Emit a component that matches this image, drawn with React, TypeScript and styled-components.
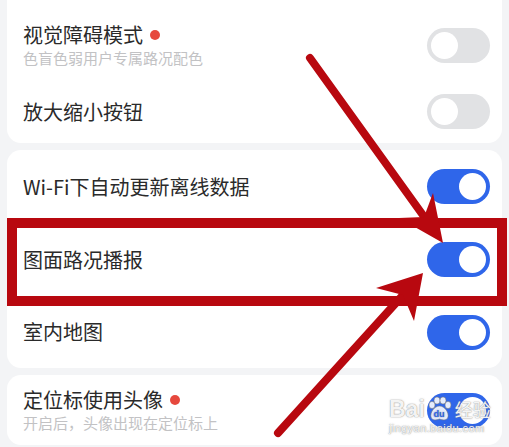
import React from 'react';
import styled, { createGlobalStyle } from 'styled-components';

const GlobalStyle = createGlobalStyle`
  body {
    margin: 0;
    background: #f3f4f6;
    font-family: "Noto Sans CJK SC", "Noto Sans", sans-serif;
  }
`;

const Page = styled.div`
  position: relative;
  width: 509px;
  height: 447px;
  overflow: hidden;
  padding: 0 7px;
  box-sizing: border-box;
  display: flex;
  flex-direction: column;
  gap: 7px;
`;

const Card = styled.div<{ $cut?: boolean }>`
  background: #ffffff;
  border-radius: ${(p) => (p.$cut ? '0 0 14px 14px' : '14px')};
  display: flex;
  flex-direction: column;
  flex-shrink: 0;
`;

const Row = styled.div<{ $h: number; $top?: number }>`
  height: ${(p) => p.$h}px;
  padding: ${(p) => p.$top || 0}px 12px 0 16px;
  box-sizing: border-box;
  display: flex;
  align-items: center;
  justify-content: space-between;
`;

const TextBlock = styled.div`
  display: flex;
  flex-direction: column;
`;

const Title = styled.div`
  display: flex;
  align-items: center;
  font-size: 20px;
  line-height: 26px;
  color: #2a2a2a;
`;

const Dot = styled.span`
  width: 10px;
  height: 10px;
  border-radius: 50%;
  background: #e6483d;
  margin-left: 7px;
`;

const Sub = styled.div`
  font-size: 15px;
  line-height: 20px;
  color: #c2c2c4;
`;

const Track = styled.div<{ $on: boolean }>`
  width: 63px;
  height: 35px;
  border-radius: 18px;
  background: ${(p) => (p.$on ? '#2f66ea' : '#e1e2e4')};
  display: flex;
  align-items: center;
  justify-content: ${(p) => (p.$on ? 'flex-end' : 'flex-start')};
  padding: 0 4px;
  box-sizing: border-box;
  flex-shrink: 0;
`;

const Knob = styled.div`
  width: 27px;
  height: 27px;
  border-radius: 50%;
  background: #ffffff;
`;

const Overlay = styled.svg`
  position: absolute;
  left: 0;
  top: 0;
  pointer-events: none;
`;

const Watermark = styled.div`
  position: absolute;
  left: 389px;
  top: 396px;
  display: flex;
  flex-direction: column;
  align-items: flex-start;
  color: rgba(255, 255, 255, 0.92);
  text-shadow: 0 0 1px rgba(110, 110, 110, 0.8), 0 0 2px rgba(150, 150, 150, 0.5);
  font-family: "Liberation Sans", sans-serif;
`;

const MarkLine = styled.div`
  display: flex;
  align-items: center;
  gap: 1px;
`;

const MarkBig = styled.span`
  font-size: 23px;
  font-weight: bold;
  line-height: 26px;
`;

const MarkCn = styled.span`
  font-family: "Noto Sans CJK SC", sans-serif;
  font-size: 18px;
  line-height: 26px;
  margin-left: 2px;
`;

const MarkUrl = styled.span`
  font-size: 11px;
  line-height: 13px;
  letter-spacing: 0.4px;
`;

const Toggle = ({ on }: { on: boolean }) => (
  <Track $on={on}>
    <Knob />
  </Track>
);

const Paw = () => (
  <svg width="26" height="26" viewBox="0 0 26 26">
    <g fill="rgba(255,255,255,0.88)" stroke="rgba(120,120,120,0.7)" strokeWidth="0.8">
      <ellipse cx="6" cy="9" rx="3" ry="3.6" />
      <ellipse cx="11" cy="4.5" rx="3" ry="3.6" />
      <ellipse cx="17" cy="4.5" rx="3" ry="3.6" />
      <ellipse cx="22" cy="9" rx="3" ry="3.6" />
      <path d="M13.5 10 C 8 10 4 17 5 21 C 6 25 11 24 13.5 23 C 16 24 21 25 22 21 C 23 17 19 10 13.5 10 Z" />
    </g>
    <text x="7.5" y="21" fontSize="9" fontWeight="bold" fill="#2f66ea" fontFamily="Liberation Sans, sans-serif">du</text>
  </svg>
);

const RED = '#b8080f';

const App = () => {
  return (
    <>
      <GlobalStyle />
      <Page>
        <Card $cut>
          <Row $h={80} $top={10}>
            <TextBlock>
              <Title>
                视觉障碍模式
                <Dot />
              </Title>
              <Sub>色盲色弱用户专属路况配色</Sub>
            </TextBlock>
            <Toggle on={false} />
          </Row>
          <Row $h={63}>
            <Title>放大缩小按钮</Title>
            <Toggle on={false} />
          </Row>
        </Card>
        <Card>
          <Row $h={73}>
            <Title>Wi-Fi下自动更新离线数据</Title>
            <Toggle on />
          </Row>
          <Row $h={73}>
            <Title>图面路况播报</Title>
            <Toggle on />
          </Row>
          <Row $h={72}>
            <Title>室内地图</Title>
            <Toggle on />
          </Row>
        </Card>
        <Card>
          <Row $h={70}>
            <TextBlock>
              <Title>
                定位标使用头像
                <Dot />
              </Title>
              <Sub>开启后，头像出现在定位标上</Sub>
            </TextBlock>
            <Toggle on />
          </Row>
        </Card>

        <Watermark>
          <MarkLine>
            <MarkBig>Bai</MarkBig>
            <Paw />
            <MarkCn>经验</MarkCn>
          </MarkLine>
          <MarkUrl>jingyan.baidu.com</MarkUrl>
        </Watermark>

        <Overlay width="509" height="447" viewBox="0 0 509 447">
          <rect x="12" y="223" width="490" height="78" fill="none" stroke={RED} strokeWidth="10" />
          <line x1="310" y1="58" x2="425" y2="218" stroke={RED} strokeWidth="8" strokeLinecap="round" />
          <polygon points="443,243 433,193 424,217 399,218" fill={RED} />
          <line x1="278" y1="433" x2="404" y2="294" stroke={RED} strokeWidth="8" strokeLinecap="round" />
          <polygon points="423,273 376,288 403,295 414,321" fill={RED} />
        </Overlay>
      </Page>
    </>
  );
};

export default App;
